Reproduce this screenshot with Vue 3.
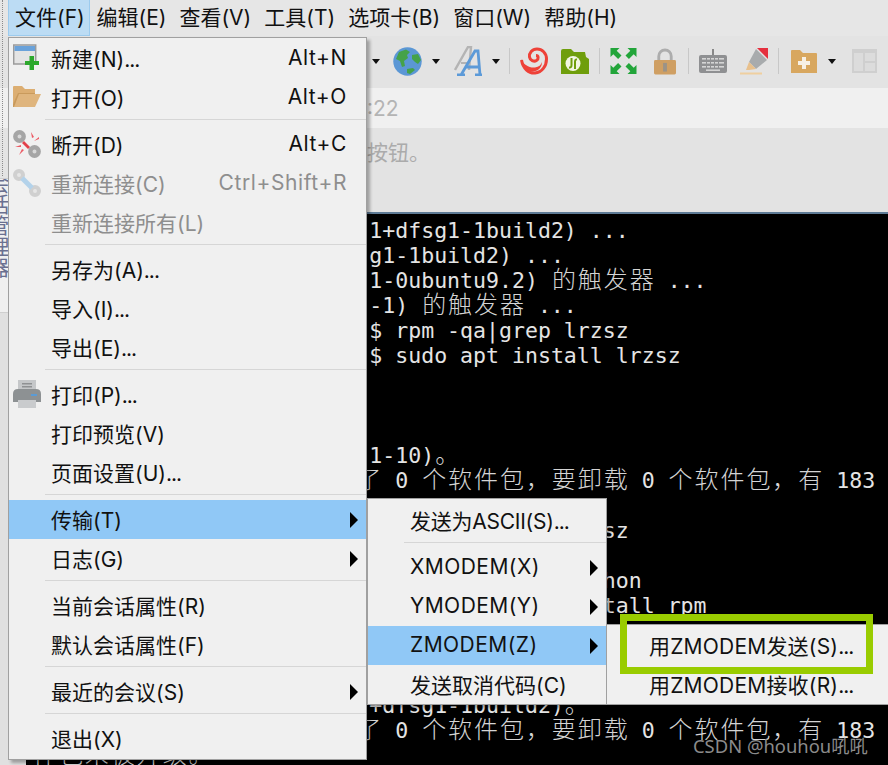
<script setup>
const menuBar = ['编辑(E)', '查看(V)', '工具(T)', '选项卡(B)', '窗口(W)', '帮助(H)']

const mainMenu = [
  { label: '新建(N)...', key: 'Alt+N', icon: 'new' },
  { label: '打开(O)', key: 'Alt+O', icon: 'open' },
  { sep: true },
  { label: '断开(D)', key: 'Alt+C', icon: 'cut' },
  { label: '重新连接(C)', key: 'Ctrl+Shift+R', icon: 'link', off: true },
  { label: '重新连接所有(L)', off: true },
  { sep: true },
  { label: '另存为(A)...' },
  { label: '导入(I)...' },
  { label: '导出(E)...' },
  { sep: true },
  { label: '打印(P)...', icon: 'print' },
  { label: '打印预览(V)' },
  { label: '页面设置(U)...' },
  { sep: true },
  { label: '传输(T)', arrow: true, on: true },
  { label: '日志(G)', arrow: true },
  { sep: true },
  { label: '当前会话属性(R)' },
  { label: '默认会话属性(F)' },
  { sep: true },
  { label: '最近的会议(S)', arrow: true },
  { sep: true },
  { label: '退出(X)' }
]

const transferMenu = [
  { label: '发送为ASCII(S)...', tight: true },
  { sep: true },
  { label: 'XMODEM(X)', arrow: true, tracked: true },
  { label: 'YMODEM(Y)', arrow: true, tracked: true },
  { label: 'ZMODEM(Z)', arrow: true, on: true, tracked: true },
  { label: '发送取消代码(C)' }
]

const hasDots = (s) => s.endsWith('...')
const head = (s) => (hasDots(s) ? s.slice(0, -3) : s)

const pad = (n) => ' '.repeat(n)
const rawLines = [
  pad(26) + '1+dfsg1-1build2) ...',
  pad(26) + 'g1-1build2) ...',
  pad(26) + '1-0ubuntu9.2) 的触发器 ...',
  pad(26) + '-1) 的触发器 ...',
  pad(26) + '$ rpm -qa|grep lrzsz',
  pad(26) + '$ sudo apt install lrzsz',
  '',
  '',
  '',
  pad(26) + '1-10)。',
  pad(25) + '了 0 个软件包，要卸载 0 个软件包，有 183',
  '',
  pad(44) + 'sz',
  '',
  pad(44) + 'hon',
  pad(44) + 'tall rpm',
  '',
  '',
  '',
  pad(26) + '+dfsg1-1build2)。',
  pad(25) + '了 0 个软件包，要卸载 0 个软件包，有 183',
  '件包未被升级。'
]

const isWide = (c) => /[\u3000-\u9fff\uff00-\uffef]/.test(c)
const lines = rawLines.map((text) => {
  const parts = []
  for (const c of text) {
    const wide = isWide(c)
    const last = parts[parts.length - 1]
    if (!wide && last && !last.wide) last.text += c
    else parts.push({ text: c, wide })
  }
  return parts
})
</script>

<template>
  <div class="app">
    <div class="menubar">
      <span class="mb-item mb-active">文件(F)</span>
      <span v-for="m in menuBar" :key="m" class="mb-item">{{ m }}</span>
    </div>

    <div class="toolbar">
      <i class="caret"></i>
      <svg class="ic g13" width="29" height="29" viewBox="0 0 29 29">
        <circle cx="14.5" cy="14.5" r="14.2" fill="#5b97d5"/>
        <path d="M6 5 L13 2.5 L17 5 L14 8 L15 11 L11 14 L12 19 L9 20 L7 14 L3 12 Z" fill="#45a24a"/>
        <path d="M19 8 L25 7 L28 13 L25 17 L22 15 L19 12 Z" fill="#45a24a"/>
        <path d="M14 22 L20 21 L22 23 L17 27 L14 26 Z" fill="#45a24a"/>
      </svg>
      <i class="caret g10"></i>
      <svg class="ic g14" width="28" height="30" viewBox="0 0 28 30">
        <path d="M1 24 L14 1 H17 L15 24" fill="none" stroke="#b4b4b4" stroke-width="2.4"/>
        <path d="M7 17 H15" stroke="#b4b4b4" stroke-width="2"/>
        <path d="M7 29 L21 5 H24 L26 29 M3 29 H11 M21 29 H28 M12 21 H25" fill="none" stroke="#5c9ad8" stroke-width="2.8"/>
      </svg>
      <i class="caret g10"></i>
      <i class="tsep g9"></i>
      <svg class="ic g10" width="28" height="28" viewBox="0 0 28 28">
        <path d="M1.5 13 C3 22 9 26.5 15 26 C22 25.5 26.5 19 26.5 12 C26.5 6 22 2 17 2 C12 2 9 6 9.5 10 C10 13.5 14 15 16.5 13.5 C19 12 18.5 8.5 16 8.5" fill="none" stroke="#ee4138" stroke-width="3"/>
        <path d="M1 12 C4 18 9 21 15 20.5 C19 20 21 18 22 15 C22 21 17 25 12 24.5 C6 24 2 19 1 12 Z" fill="#ee4138"/>
      </svg>
      <svg class="ic g13" width="28" height="25" viewBox="0 0 28 25">
        <path d="M0 2 Q0 0 2 0 H10 L13 3 H24 L25 8 L28 10 V25 H0 Z" fill="#6f9e0c"/>
        <circle cx="12" cy="14.5" r="7.5" fill="#f2f6e2"/>
        <path d="M10.5 9 V16 Q10.5 19 8 18.5 M14 20 V13 Q14 10 16 10.5" fill="none" stroke="#6f9e0c" stroke-width="2"/>
      </svg>
      <i class="tsep g10"></i>
      <svg class="ic g10" width="27" height="26" viewBox="0 0 26 26" fill="#22a53a">
        <path d="M0 0 H9 L6.2 2.8 L11 7.6 L7.6 11 L2.8 6.2 L0 9 Z"/>
        <path d="M26 0 V9 L23.2 6.2 L18.4 11 L15 7.6 L19.8 2.8 L17 0 Z"/>
        <path d="M0 26 V17 L2.8 19.8 L7.6 15 L11 18.4 L6.2 23.2 L9 26 Z"/>
        <path d="M26 26 H17 L19.8 23.2 L15 18.4 L18.4 15 L23.2 19.8 L26 17 Z"/>
      </svg>
      <svg class="ic g17" width="22" height="27" viewBox="0 0 23 27">
        <path d="M5 13 V8 A6.5 6.5 0 0 1 18 8 V13" fill="none" stroke="#adadad" stroke-width="3"/>
        <rect x="0" y="12" width="23" height="15" rx="1.5" fill="#cf9f63"/>
        <rect x="9.5" y="15" width="4" height="9" fill="#9b9387"/>
      </svg>
      <i class="tsep g12"></i>
      <svg class="ic g10" width="28" height="24" viewBox="0 0 28 24">
        <rect x="13" y="0" width="2" height="7" fill="#888"/>
        <rect x="0" y="6" width="28" height="18" rx="2" fill="#8f9092"/>
        <g fill="#d5d5d5">
          <rect x="3" y="9" width="22" height="1.6"/>
          <rect x="3" y="13" width="22" height="1.6"/>
          <rect x="3" y="17" width="22" height="1.6"/>
          <rect x="7" y="20.4" width="14" height="1.6"/>
        </g>
        <g fill="#8f9092">
          <rect x="7" y="8" width="1" height="12"/>
          <rect x="11" y="8" width="1" height="12"/>
          <rect x="15" y="8" width="1" height="12"/>
          <rect x="19" y="8" width="1" height="12"/>
        </g>
      </svg>
      <svg class="ic g13" width="28" height="27" viewBox="0 0 28 27">
        <path d="M17 0 L28 0 V11 Z" fill="#e5303f"/>
        <path d="M16 1 L27 12 L16 21 L9 14 Z" fill="#a8abad"/>
        <path d="M9 14 L16 21 L9 22 L6 22 Z" fill="#e8c08c"/>
        <rect x="0" y="24.5" width="22" height="2" fill="#efcf9f"/>
      </svg>
      <i class="tsep g10"></i>
      <svg class="ic g12" width="26" height="23" viewBox="0 0 26 23">
        <path d="M0 1 Q0 0 1 0 H9 L12 3 H25 Q26 3 26 4 V23 H0 Z" fill="#d8a75f"/>
        <path d="M11 7 H15 V11 H19 V15 H15 V19 H11 V15 H7 V11 H11 Z" fill="#f7f0e4"/>
      </svg>
      <i class="caret g11"></i>
      <svg class="ic g16" width="25" height="24" viewBox="0 0 25 24">
        <rect width="25" height="24" fill="#cfcfcf"/>
        <rect x="2" y="4" width="9" height="18" fill="#dcdcdc"/>
        <rect x="13" y="4" width="10" height="8" fill="#dcdcdc"/>
        <rect x="13" y="14" width="10" height="8" fill="#dcdcdc"/>
      </svg>
    </div>

    <div class="addr">:22</div>
    <div class="info">按钮。</div>
    <div class="rule"></div>

    <div class="body">
      <div class="sidebar"></div>
      <div class="term">
        <div v-for="(parts, i) in lines" :key="i" class="tline"><template v-for="(p, j) in parts" :key="j"><span v-if="p.wide" class="wide">{{ p.text }}</span><span v-else>{{ p.text }}</span></template></div>
      </div>
    </div>

    <div class="grip"></div>
    <div class="sidetab"><span class="sidetext">会话管理器</span></div>

    <div class="menu main">
      <template v-for="(it, i) in mainMenu" :key="i">
        <div v-if="it.sep" class="sep"><span></span></div>
        <div v-else class="item" :class="{ on: it.on, off: it.off }">
          <span class="slot">
            <svg v-if="it.icon === 'new'" class="ic" width="28" height="28" viewBox="0 0 28 28">
              <rect x="0.7" y="1" width="22" height="19" fill="#e4e4e4" stroke="#9b9b9b" stroke-width="1.5"/>
              <rect x="1.5" y="2" width="20.5" height="5" fill="#6aa2da"/>
              <path d="M16.5 12 H21 V17 H26 V21 H21 V26 H16.5 V21 H12 V17 H16.5 Z" fill="#2ca82c"/>
            </svg>
            <svg v-else-if="it.icon === 'open'" class="ic" width="28" height="22" viewBox="0 0 28 22">
              <path d="M0 1 Q0 0 1 0 H9 L12 3 H22 V7 H6 L0 19 Z" fill="#dcae72"/>
              <path d="M5 8 H28 L22 21 H0 Z" fill="#dfb57e"/>
              <path d="M0 18 L5 7 H22 V8 H6 L1 21 H0 Z" fill="#c99a5c"/>
            </svg>
            <svg v-else-if="it.icon === 'cut'" class="ic soft" width="28" height="28" viewBox="0 0 28 28">
              <circle cx="6.5" cy="6.5" r="4.2" fill="#d8d8d8" stroke="#a5a5a5" stroke-width="4.4"/>
              <circle cx="21.5" cy="21.5" r="4.2" fill="#d8d8d8" stroke="#a5a5a5" stroke-width="4.4"/>
              <path d="M11 11 L17 17 L15 19 L9 13 Z" fill="#e2404a"/>
              <path d="M18 2 L21 7 L19 8 Z M26 7 L26 9 L21 11 Z M2 17 L8 15 L8 17 Z M6 25 L9 19 L11 20 Z" fill="#ec5a64"/>
            </svg>
            <svg v-else-if="it.icon === 'link'" class="ic soft" width="28" height="28" viewBox="0 0 28 28">
              <circle cx="6" cy="6" r="4" fill="#e6e6e6" stroke="#d0d0d0" stroke-width="4"/>
              <circle cx="22" cy="22" r="4" fill="#e6e6e6" stroke="#d0d0d0" stroke-width="4"/>
              <path d="M9 9 L19 19" stroke="#b3d2ea" stroke-width="5"/>
            </svg>
            <svg v-else-if="it.icon === 'print'" class="ic soft" width="28" height="28" viewBox="0 0 28 28">
              <path d="M5 0 H23 V10 H5 Z" fill="#c5c7c9"/>
              <rect x="9" y="3" width="10" height="1.5" fill="#8f9193"/>
              <rect x="9" y="6" width="10" height="1.5" fill="#8f9193"/>
              <path d="M0 14 Q0 9 5 9 H23 Q28 9 28 14 V22 H0 Z" fill="#8d9193"/>
              <rect x="18" y="14" width="6" height="2" fill="#5b9bd5"/>
              <rect x="5" y="20" width="18" height="8" fill="#c9cbcd"/>
            </svg>
          </span>
          <span class="label">{{ head(it.label) }}<span v-if="hasDots(it.label)" class="dots">...</span></span>
          <span v-if="it.key" class="key">{{ it.key }}</span>
          <i v-if="it.arrow" class="arrow"></i>
        </div>
      </template>
    </div>

    <div class="menu transfer">
      <template v-for="(it, i) in transferMenu" :key="i">
        <div v-if="it.sep" class="sep"><span></span></div>
        <div v-else class="item" :class="{ on: it.on, tracked: it.tracked, tight: it.tight }">
          <span class="label">{{ head(it.label) }}<span v-if="hasDots(it.label)" class="dots">...</span></span>
          <i v-if="it.arrow" class="arrow"></i>
        </div>
      </template>
    </div>

    <div class="menu zmodem">
      <div class="item tracked-s"><span class="label">用ZMODEM发送(S)<span class="dots">...</span></span></div>
      <div class="item tracked-s"><span class="label">用ZMODEM接收(R)<span class="dots">...</span></span></div>
    </div>

    <div class="callout"></div>
    <div class="mark">CSDN @houhou吼吼</div>
  </div>
</template>

<style scoped>
.app {
  position: relative;
  width: 888px;
  height: 765px;
  overflow: hidden;
  display: flex;
  flex-direction: column;
  background: #e3e3e3;
  font-family: "Inter", "Noto Sans CJK SC", sans-serif;
  font-size: 21px;
  color: #111;
}
.menubar {
  height: 36px;
  flex: none;
  display: flex;
  align-items: stretch;
  padding-left: 8px;
  background: #e6e6e6;
}
.mb-item {
  padding: 0 5.5px;
  line-height: 36px;
  white-space: nowrap;
  border: 1px solid transparent;
  border-top: 0;
}
.mb-active {
  width: 82px;
  box-sizing: border-box;
  padding: 0 6px;
  background: #bcdcf4;
  border-color: #9ccbee;
}
.toolbar {
  height: 52px;
  flex: none;
  display: flex;
  align-items: center;
  padding: 0 0 2px 372px;
  box-sizing: border-box;
  background: #e3e3e3;
}
.ic { display: block; flex: none; filter: blur(0.35px); }
.ic.soft { filter: blur(0.6px); }
.caret {
  flex: none;
  width: 0;
  height: 0;
  border-left: 4.5px solid transparent;
  border-right: 4.5px solid transparent;
  border-top: 5px solid #111;
}
.tsep { flex: none; width: 1px; height: 26px; background: #c8c8c8; }
.g9 { margin-left: 9px; }
.g10 { margin-left: 10px; }
.g11 { margin-left: 11px; }
.g12 { margin-left: 12px; }
.g13 { margin-left: 13px; }
.g14 { margin-left: 14px; }
.g16 { margin-left: 16px; }
.g17 { margin-left: 17px; }
.addr {
  height: 40px;
  flex: none;
  box-sizing: border-box;
  padding-left: 367px;
  line-height: 42px;
  background: #f0f0f0;
  color: #b4b4b4;
}
.info {
  height: 84px;
  flex: none;
  box-sizing: border-box;
  padding-left: 367px;
  padding-top: 8px;
  line-height: 34px;
  color: #ababab;
}
.rule { height: 2px; flex: none; background: #5e7b96; }
.body { flex: 1; display: flex; min-height: 0; }
.sidebar { width: 26px; flex: none; background: #e0e0e0; }
.term {
  flex: 1;
  min-width: 0;
  background: #000;
  padding: 4px 0 0 6px;
  font-family: "DejaVu Sans Mono", "Noto Sans CJK SC", monospace;
  font-size: 21.55px;
  line-height: 25px;
  color: #e4e4e4;
  overflow: hidden;
}
.tline { height: 25px; white-space: pre; }
.wide {
  display: inline-block;
  width: 25.94px;
  text-align: center;
  font-family: "Noto Sans CJK SC", sans-serif;
  font-size: 24px;
  font-weight: 300;
  line-height: 1px;
  color: #d4d4d4;
}
.grip {
  position: absolute;
  left: 2px;
  top: 0;
  height: 176px;
  border-left: 1px dotted #8a8a8a;
}
.sidetab {
  position: absolute;
  left: 0;
  top: 178px;
  width: 8px;
  height: 133px;
  overflow: hidden;
  background: #f0f0f0;
  border-top: 1px solid #cfcfcf;
  border-bottom: 1px solid #cfcfcf;
}
.sidetext {
  position: absolute;
  right: 0;
  top: -6px;
  writing-mode: vertical-rl;
  font-size: 21px;
  line-height: 22px;
  color: #6a7090;
  white-space: nowrap;
}
.menu {
  position: absolute;
  box-sizing: border-box;
  background: #f0f0f0;
  border: 1px solid #a0a0a0;
  box-shadow: 3px 3px 3px rgba(0, 0, 0, 0.3);
}
.main { left: 8px; top: 37px; width: 359px; height: 723px; padding-top: 1px; }
.transfer { left: 367px; top: 498px; width: 240px; height: 207px; padding-top: 2px; }
.zmodem { left: 606px; top: 624px; width: 300px; height: 81px; padding-top: 1px; }
.item {
  height: 39px;
  box-sizing: border-box;
  padding-bottom: 2px;
  display: flex;
  align-items: center;
  position: relative;
  white-space: nowrap;
}
.item.on { background: #90c8f6; }
.item.off { color: #8e8e8e; }
.item.tracked { letter-spacing: 0.45px; }
.item.tight { letter-spacing: -0.25px; }
.item.tracked-s { letter-spacing: 0.2px; }
.slot {
  flex: none;
  width: 42px;
  padding-left: 4px;
  box-sizing: border-box;
  display: flex;
  align-items: center;
}
.label { flex: 1; }
.dots { letter-spacing: -1px; }
.key { margin-right: 19px; letter-spacing: 0.6px; }
.transfer .label { padding-left: 42px; }
.zmodem .label { padding-left: 42px; }
.arrow {
  position: absolute;
  right: 8px;
  top: 50%;
  margin-top: -8px;
  width: 0;
  height: 0;
  border-top: 8px solid transparent;
  border-bottom: 8px solid transparent;
  border-left: 8px solid #000;
}
.sep { height: 8px; padding: 2px 0 0 36px; box-sizing: border-box; }
.sep span { display: block; height: 1px; background: #d6d6d6; }
.callout {
  position: absolute;
  left: 620px;
  top: 614px;
  width: 253px;
  height: 60px;
  box-sizing: border-box;
  border: 7px solid #99cc00;
}
.mark {
  position: absolute;
  left: 693px;
  top: 732px;
  font-family: "Noto Sans", "Noto Sans CJK SC", sans-serif;
  font-size: 18.4px;
  line-height: 28px;
  color: #8b8b8b;
  white-space: nowrap;
}
</style>
